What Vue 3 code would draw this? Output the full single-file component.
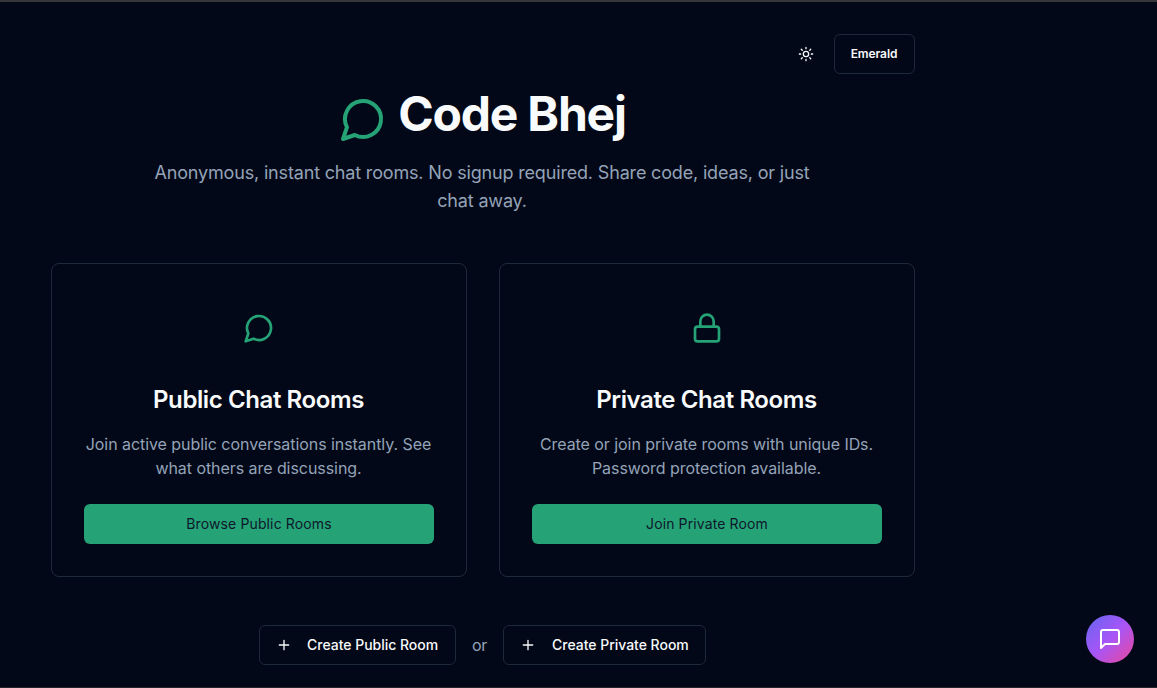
<script setup>
const rooms = [
  {
    icon: 'chat',
    title: 'Public Chat Rooms',
    lines: ['Join active public conversations instantly. See', 'what others are discussing.'],
    action: 'Browse Public Rooms',
  },
  {
    icon: 'lock',
    title: 'Private Chat Rooms',
    lines: ['Create or join private rooms with unique IDs.', 'Password protection available.'],
    action: 'Join Private Room',
  },
]
</script>

<template>
  <div class="page">
    <main class="container">
      <div class="toolbar">
        <button class="theme" aria-label="Toggle theme">
          <svg class="icon sun" viewBox="0 0 24 24">
            <circle cx="12" cy="12" r="4" />
            <path d="M12 2v2M12 20v2m-7.07-17.07 1.41 1.41m11.32 11.32 1.41 1.41M2 12h2m16 0h2M6.34 17.66l-1.41 1.41M19.07 4.93l-1.41 1.41" />
          </svg>
        </button>
        <button class="outline palette">Emerald</button>
      </div>

      <header class="hero">
        <h1>
          <svg class="icon logo" viewBox="0 0 24 24"><path d="M7.9 20A9 9 0 1 0 4 16.1L2 22Z" /></svg>
          <span>Code Bhej</span>
        </h1>
        <p>Anonymous, instant chat rooms. No signup required. Share code, ideas, or just<br />chat away.</p>
      </header>

      <section class="cards">
        <article v-for="room in rooms" :key="room.title" class="card">
          <svg class="icon mark" viewBox="0 0 24 24">
            <path v-if="room.icon === 'chat'" d="M7.9 20A9 9 0 1 0 4 16.1L2 22Z" />
            <template v-else>
              <rect x="3" y="11" width="18" height="11" rx="2" />
              <path d="M7 11V7a5 5 0 0 1 10 0v4" />
            </template>
          </svg>
          <h2>{{ room.title }}</h2>
          <p>{{ room.lines[0] }}<br />{{ room.lines[1] }}</p>
          <button class="primary">{{ room.action }}</button>
        </article>
      </section>

      <div class="create">
        <button class="outline create-public">
          <svg class="icon plus" viewBox="0 0 24 24"><path d="M5 12h14M12 5v14" /></svg>
          <span>Create Public Room</span>
        </button>
        <span class="or">or</span>
        <button class="outline create-private">
          <svg class="icon plus" viewBox="0 0 24 24"><path d="M5 12h14M12 5v14" /></svg>
          <span>Create Private Room</span>
        </button>
      </div>
    </main>

    <button class="bubble" aria-label="Open chat">
      <svg class="icon" viewBox="0 0 24 24"><path d="M21 15a2 2 0 0 1-2 2H7l-4 4V5a2 2 0 0 1 2-2h14a2 2 0 0 1 2 2z" /></svg>
    </button>
  </div>
</template>

<style>
body { margin: 0; background: #020817; overflow: hidden; }
</style>

<style scoped>
.page {
  box-sizing: border-box;
  height: 688px;
  padding: 32px 0 0 51px;
  overflow: hidden;
  border-top: 2px solid #37373a;
  border-bottom: 1px solid #242629;
  background: #020817;
  color: #f8fafc;
  font-family: Inter, "Liberation Sans", sans-serif;
}
.container { width: 864px; }
h1, h2, p { margin: 0; }
button { font: inherit; color: inherit; padding: 0; background: none; border: 0; }
.icon { flex: none; fill: none; stroke: currentColor; stroke-width: 2; stroke-linecap: round; stroke-linejoin: round; }
.toolbar { display: flex; justify-content: flex-end; gap: 8px; }
.theme { display: grid; place-items: center; width: 40px; height: 40px; }
.sun { width: 16px; height: 16px; }
.outline {
  box-sizing: border-box;
  display: flex;
  align-items: center;
  height: 40px;
  padding: 0 16px;
  border: 1px solid #1e293b;
  border-radius: 6px;
  font-size: 14px;
  font-weight: 500;
  white-space: nowrap;
}
.palette { width: 81px; justify-content: center; padding: 0 1px 2px 0; font-size: 12px; font-weight: 600; letter-spacing: -.1px; }
.hero { height: 189px; text-align: center; }
h1 { display: flex; justify-content: center; height: 85px; font-size: 48px; line-height: 80px; font-weight: 700; letter-spacing: -1.2px; }
.logo { width: 48px; height: 48px; margin: 21px 11px 0 -1px; color: #25a377; }
.hero p { padding-right: 2px; font-size: 18px; line-height: 28px; letter-spacing: -.17px; color: #94a3b8; }
.cards { display: grid; grid-template-columns: 1fr 1fr; gap: 32px; }
.card {
  box-sizing: border-box;
  display: flex;
  flex-direction: column;
  align-items: center;
  height: 314px;
  padding: 48px 32px 32px;
  border: 1px solid #1e293b;
  border-radius: 8px;
  text-align: center;
}
.mark { width: 32px; height: 32px; color: #25a377; }
h2 { margin-top: 40px; padding-right: 1px; font-size: 24px; line-height: 32px; font-weight: 600; letter-spacing: -.4px; }
.card p { margin-top: 16px; padding-right: 1px; font-size: 16px; line-height: 24px; letter-spacing: -.06px; color: #94a3b8; }
.primary { box-sizing: border-box; width: 100%; height: 40px; margin-top: auto; padding-bottom: 2px; border-radius: 6px; background: #25a377; color: #0f172a; font-size: 14px; font-weight: 400; letter-spacing: .12px; }
.create { display: flex; align-items: center; margin: 48px 0 0 208px; color: #94a3b8; font-size: 16px; }
.create .outline { color: #f8fafc; }
.create .outline span { padding-bottom: 2px; letter-spacing: -.02px; }
.create-public { width: 197px; }
.create-private { width: 203px; }
.or { width: 47px; text-align: center; letter-spacing: -.2px; }
.plus { width: 16px; height: 16px; margin-right: 15px; }
.create-private .plus { margin-right: 16px; }
.bubble {
  position: absolute;
  left: 1086px;
  top: 615px;
  display: grid;
  place-items: center;
  width: 48px;
  height: 48px;
  border-radius: 50%;
  background: linear-gradient(135deg, #6366f1, #a855f7 50%, #ec4899);
  color: #fff;
}
.bubble .icon { width: 24px; height: 24px; }
</style>
